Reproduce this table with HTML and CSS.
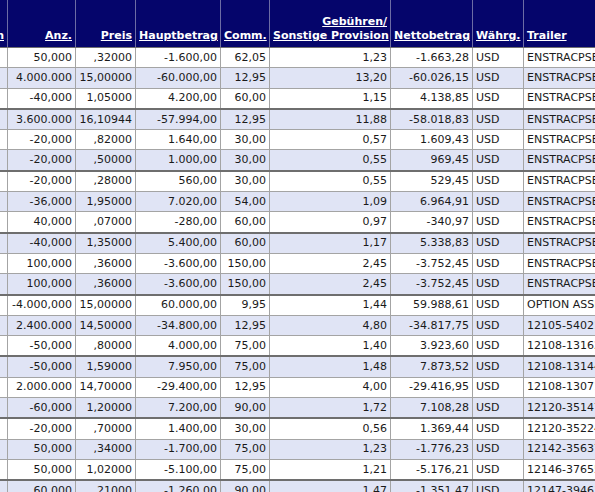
FILE: index.html
```html
<!DOCTYPE html>
<html lang="de">
<head>
    <meta charset="UTF-8">
    <title>Transaktionen</title>
    <link rel="stylesheet" href="styles.css">
</head>
<body>
    <div class="report">
    <table class="trades">
        <colgroup>
            <col class="c-pos">
            <col class="c-anz">
            <col class="c-preis">
            <col class="c-haupt">
            <col class="c-comm">
            <col class="c-geb">
            <col class="c-netto">
            <col class="c-wahr">
            <col class="c-trailer">
        </colgroup>
        <thead>
            <tr>
                <th class="num"><a>Position</a></th>
                <th class="num"><a>Anz.</a></th>
                <th class="num"><a>Preis</a></th>
                <th class="num"><a>Hauptbetrag</a></th>
                <th class="num"><a>Comm.</a></th>
                <th class="num"><a>Gebühren/<br>Sonstige Provision</a></th>
                <th class="num"><a>Nettobetrag</a></th>
                <th><a>Währg.</a></th>
                <th><a>Trailer</a></th>
            </tr>
        </thead>
        <tbody>
            <tr><td></td><td>50,000</td><td>,32000</td><td>-1.600,00</td><td>62,05</td><td>1,23</td><td>-1.663,28</td><td class="txt">USD</td><td class="txt">ENSTRACPSEC</td></tr>
            <tr><td></td><td>4.000.000</td><td>15,00000</td><td>-60.000,00</td><td>12,95</td><td>13,20</td><td>-60.026,15</td><td class="txt">USD</td><td class="txt">ENSTRACPSEC</td></tr>
            <tr><td></td><td>-40,000</td><td>1,05000</td><td>4.200,00</td><td>60,00</td><td>1,15</td><td>4.138,85</td><td class="txt">USD</td><td class="txt">ENSTRACPSEC</td></tr>
            <tr class="grp"><td></td><td>3.600.000</td><td>16,10944</td><td>-57.994,00</td><td>12,95</td><td>11,88</td><td>-58.018,83</td><td class="txt">USD</td><td class="txt">ENSTRACPSEC</td></tr>
            <tr><td></td><td>-20,000</td><td>,82000</td><td>1.640,00</td><td>30,00</td><td>0,57</td><td>1.609,43</td><td class="txt">USD</td><td class="txt">ENSTRACPSEC</td></tr>
            <tr><td></td><td>-20,000</td><td>,50000</td><td>1.000,00</td><td>30,00</td><td>0,55</td><td>969,45</td><td class="txt">USD</td><td class="txt">ENSTRACPSEC</td></tr>
            <tr class="grp"><td></td><td>-20,000</td><td>,28000</td><td>560,00</td><td>30,00</td><td>0,55</td><td>529,45</td><td class="txt">USD</td><td class="txt">ENSTRACPSEC</td></tr>
            <tr><td></td><td>-36,000</td><td>1,95000</td><td>7.020,00</td><td>54,00</td><td>1,09</td><td>6.964,91</td><td class="txt">USD</td><td class="txt">ENSTRACPSEC</td></tr>
            <tr><td></td><td>40,000</td><td>,07000</td><td>-280,00</td><td>60,00</td><td>0,97</td><td>-340,97</td><td class="txt">USD</td><td class="txt">ENSTRACPSEC</td></tr>
            <tr class="grp"><td></td><td>-40,000</td><td>1,35000</td><td>5.400,00</td><td>60,00</td><td>1,17</td><td>5.338,83</td><td class="txt">USD</td><td class="txt">ENSTRACPSEC</td></tr>
            <tr><td></td><td>100,000</td><td>,36000</td><td>-3.600,00</td><td>150,00</td><td>2,45</td><td>-3.752,45</td><td class="txt">USD</td><td class="txt">ENSTRACPSEC</td></tr>
            <tr><td></td><td>100,000</td><td>,36000</td><td>-3.600,00</td><td>150,00</td><td>2,45</td><td>-3.752,45</td><td class="txt">USD</td><td class="txt">ENSTRACPSEC</td></tr>
            <tr class="grp"><td></td><td>-4.000,000</td><td>15,00000</td><td>60.000,00</td><td>9,95</td><td>1,44</td><td>59.988,61</td><td class="txt">USD</td><td class="txt">OPTION ASSIGN</td></tr>
            <tr><td></td><td>2.400.000</td><td>14,50000</td><td>-34.800,00</td><td>12,95</td><td>4,80</td><td>-34.817,75</td><td class="txt">USD</td><td class="txt">12105-54021</td></tr>
            <tr><td></td><td>-50,000</td><td>,80000</td><td>4.000,00</td><td>75,00</td><td>1,40</td><td>3.923,60</td><td class="txt">USD</td><td class="txt">12108-13162</td></tr>
            <tr class="grp"><td></td><td>-50,000</td><td>1,59000</td><td>7.950,00</td><td>75,00</td><td>1,48</td><td>7.873,52</td><td class="txt">USD</td><td class="txt">12108-13144</td></tr>
            <tr><td></td><td>2.000.000</td><td>14,70000</td><td>-29.400,00</td><td>12,95</td><td>4,00</td><td>-29.416,95</td><td class="txt">USD</td><td class="txt">12108-13071</td></tr>
            <tr><td></td><td>-60,000</td><td>1,20000</td><td>7.200,00</td><td>90,00</td><td>1,72</td><td>7.108,28</td><td class="txt">USD</td><td class="txt">12120-35147</td></tr>
            <tr class="grp"><td></td><td>-20,000</td><td>,70000</td><td>1.400,00</td><td>30,00</td><td>0,56</td><td>1.369,44</td><td class="txt">USD</td><td class="txt">12120-35224</td></tr>
            <tr><td></td><td>50,000</td><td>,34000</td><td>-1.700,00</td><td>75,00</td><td>1,23</td><td>-1.776,23</td><td class="txt">USD</td><td class="txt">12142-35637</td></tr>
            <tr><td></td><td>50,000</td><td>1,02000</td><td>-5.100,00</td><td>75,00</td><td>1,21</td><td>-5.176,21</td><td class="txt">USD</td><td class="txt">12146-37655</td></tr>
            <tr class="grp"><td></td><td>60,000</td><td>,21000</td><td>-1.260,00</td><td>90,00</td><td>1,47</td><td>-1.351,47</td><td class="txt">USD</td><td class="txt">12147-39461</td></tr>
        </tbody>
    </table>
    </div>
</body>
</html>
```

FILE: styles.css
```css
body {
    margin: 0;
    background: #fff;
    font-family: "DejaVu Sans", Verdana, sans-serif;
    font-size: 11px;
    color: #1a1a1a;
    overflow: hidden;
}
.report {
    width: 595px;
    height: 492px;
    overflow: hidden;
}
.trades {
    border-collapse: collapse;
    table-layout: fixed;
    width: 800px;
    margin-left: -60px;
}
.c-pos { width: 67px; }
.c-anz { width: 68px; }
.c-preis { width: 60px; }
.c-haupt { width: 85px; }
.c-comm { width: 49px; }
.c-geb { width: 121px; }
.c-netto { width: 82px; }
.c-wahr { width: 51px; }
.c-trailer { width: 217px; }

.trades th {
    background: #05056b;
    color: #fff;
    font-weight: bold;
    height: 43px;
    padding: 0 3px 4px 3px;
    vertical-align: bottom;
    text-align: left;
    border-left: 1px solid #6c6ca4;
    border-bottom: 1px solid #707070;
    white-space: nowrap;
    overflow: hidden;
    line-height: 14px;
}
.trades th.num {
    text-align: right;
}
.trades th a {
    text-decoration: underline;
}
.trades td {
    height: 19.3px;
    padding: 0 3px 0 3px;
    text-align: right;
    border: 1px solid #a4a4a4;
    white-space: nowrap;
    overflow: hidden;
    line-height: 18px;
}
.trades td.txt {
    text-align: left;
}
.trades tbody tr:nth-child(even) td {
    background: #e0e4f5;
}
.trades tr.grp td {
    border-top: 2px solid #6e6e6e;
}
```
